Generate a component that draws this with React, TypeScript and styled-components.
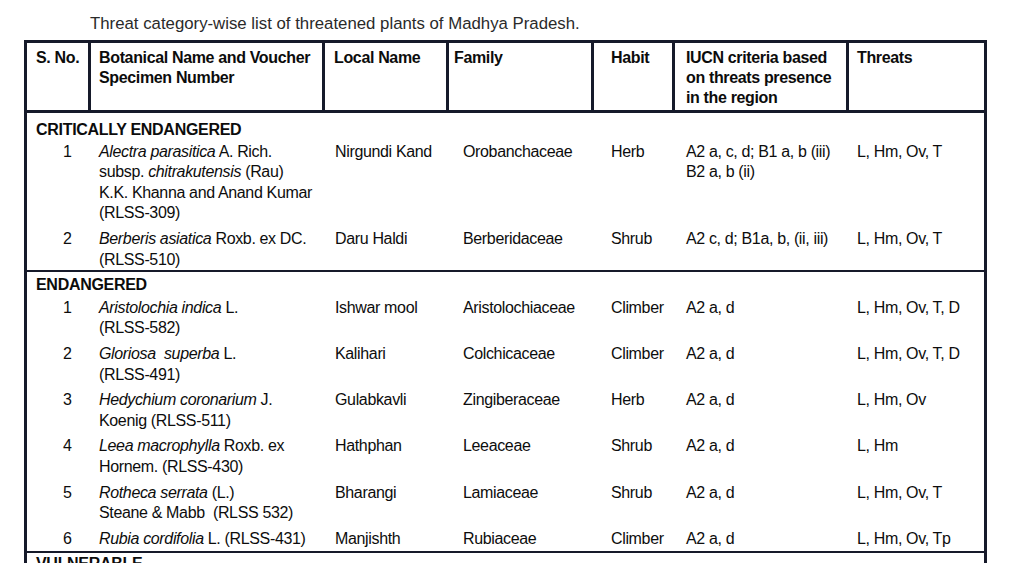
import React from "react";
import styled, { createGlobalStyle } from "styled-components";

const Global = createGlobalStyle`
  html, body { margin: 0; padding: 0; background: #fff; overflow: hidden; }
  body { font-family: "Liberation Sans", Arial, sans-serif; color: #111; }
`;

const COLS = "64px 234px 124px 145px 81px 174px 135px";
const BORDER = "#161a2a";

const Page = styled.div`
  width: 1024px;
  height: 563px;
  overflow: hidden;
  padding-top: 14px;
  box-sizing: border-box;
`;

const Title = styled.div`
  margin-left: 90px;
  font-size: 16.8px;
  line-height: 20px;
  color: #2a2a2a;
  height: 26px;
`;

const Table = styled.div`
  margin-left: 24px;
  width: 963px;
  border: 3px solid ${BORDER};
  border-bottom: none;
  box-sizing: border-box;
`;

const HeadRow = styled.div`
  display: grid;
  grid-template-columns: ${COLS};
  height: 70px;
  border-bottom: 3px solid ${BORDER};
  box-sizing: border-box;
`;

const HeadCell = styled.div<{ $pad: number; $last?: boolean }>`
  padding: 5px 0 0 ${(p) => p.$pad}px;
  border-right: ${(p) => (p.$last ? "none" : `3px solid ${BORDER}`)};
  font-weight: 700;
  font-size: 16px;
  line-height: 20px;
  letter-spacing: -0.35px;
  color: #0c0c0c;
`;

const Section = styled.div<{ $top: number; $bottom: number }>`
  padding: ${(p) => p.$top}px 0 ${(p) => p.$bottom}px 0;
  border-bottom: 2px solid ${BORDER};
`;

const SectionTitle = styled.div`
  padding-left: 9px;
  font-weight: 700;
  font-size: 16px;
  line-height: 20.6px;
  letter-spacing: -0.3px;
  color: #0c0c0c;
`;

const Row = styled.div<{ $gap: number }>`
  display: grid;
  grid-template-columns: ${COLS};
  margin-top: ${(p) => p.$gap}px;
  font-size: 16px;
  line-height: 20.6px;
  letter-spacing: -0.35px;
  color: #0d0d0d;
`;

const Cell = styled.div<{ $pad: number }>`
  padding-left: ${(p) => p.$pad}px;
  white-space: nowrap;
`;

const It = styled.i`
  font-style: italic;
`;

const HEAD_PADS = [9, 8, 9, 5, 17, 11, 8];
const BODY_PADS = [36, 8, 10, 14, 17, 11, 8];

type RowData = {
  n: string;
  name: React.ReactNode;
  local: string;
  family: string;
  habit: string;
  iucn: React.ReactNode;
  threats: string;
};

const critical: RowData[] = [
  {
    n: "1",
    name: (
      <>
        <It>Alectra parasitica</It> A. Rich.
        <br />
        subsp. <It>chitrakutensis</It> (Rau)
        <br />
        K.K. Khanna and Anand Kumar
        <br />
        (RLSS-309)
      </>
    ),
    local: "Nirgundi Kand",
    family: "Orobanchaceae",
    habit: "Herb",
    iucn: (
      <>
        A2 a, c, d; B1 a, b (iii)
        <br />
        B2 a, b (ii)
      </>
    ),
    threats: "L, Hm, Ov, T",
  },
  {
    n: "2",
    name: (
      <>
        <It>Berberis asiatica</It> Roxb. ex DC.
        <br />
        (RLSS-510)
      </>
    ),
    local: "Daru Haldi",
    family: "Berberidaceae",
    habit: "Shrub",
    iucn: "A2 c, d; B1a, b, (ii, iii)",
    threats: "L, Hm, Ov, T",
  },
];

const endangered: RowData[] = [
  {
    n: "1",
    name: (
      <>
        <It>Aristolochia indica</It> L.
        <br />
        (RLSS-582)
      </>
    ),
    local: "Ishwar mool",
    family: "Aristolochiaceae",
    habit: "Climber",
    iucn: "A2 a, d",
    threats: "L, Hm, Ov, T, D",
  },
  {
    n: "2",
    name: (
      <>
        <It>Gloriosa&nbsp; superba</It> L.
        <br />
        (RLSS-491)
      </>
    ),
    local: "Kalihari",
    family: "Colchicaceae",
    habit: "Climber",
    iucn: "A2 a, d",
    threats: "L, Hm, Ov, T, D",
  },
  {
    n: "3",
    name: (
      <>
        <It>Hedychium coronarium</It> J.
        <br />
        Koenig (RLSS-511)
      </>
    ),
    local: "Gulabkavli",
    family: "Zingiberaceae",
    habit: "Herb",
    iucn: "A2 a, d",
    threats: "L, Hm, Ov",
  },
  {
    n: "4",
    name: (
      <>
        <It>Leea macrophylla</It> Roxb. ex
        <br />
        Hornem. (RLSS-430)
      </>
    ),
    local: "Hathphan",
    family: "Leeaceae",
    habit: "Shrub",
    iucn: "A2 a, d",
    threats: "L, Hm",
  },
  {
    n: "5",
    name: (
      <>
        <It>Rotheca serrata</It> (L.)
        <br />
        Steane &amp; Mabb&nbsp; (RLSS 532)
      </>
    ),
    local: "Bharangi",
    family: "Lamiaceae",
    habit: "Shrub",
    iucn: "A2 a, d",
    threats: "L, Hm, Ov, T",
  },
  {
    n: "6",
    name: (
      <>
        <It>Rubia cordifolia</It> L. (RLSS-431)
      </>
    ),
    local: "Manjishth",
    family: "Rubiaceae",
    habit: "Climber",
    iucn: "A2 a, d",
    threats: "L, Hm, Ov, Tp",
  },
];

const headers: React.ReactNode[] = [
  "S. No.",
  <>
    Botanical Name and Voucher
    <br />
    Specimen Number
  </>,
  "Local Name",
  "Family",
  "Habit",
  <>
    IUCN criteria based
    <br />
    on threats presence
    <br />
    in the region
  </>,
  "Threats",
];

function DataRow({ r, gap }: { r: RowData; gap: number }) {
  const cells = [r.n, r.name, r.local, r.family, r.habit, r.iucn, r.threats];
  return (
    <Row $gap={gap}>
      {cells.map((c, i) => (
        <Cell key={i} $pad={BODY_PADS[i]}>
          {c}
        </Cell>
      ))}
    </Row>
  );
}

function Category({
  title,
  rows,
  top,
  bottom,
  firstGap,
  gap,
}: {
  title: string;
  rows: RowData[];
  top: number;
  bottom: number;
  firstGap: number;
  gap: number;
}) {
  return (
    <Section $top={top} $bottom={bottom}>
      <SectionTitle>{title}</SectionTitle>
      {rows.map((r, i) => (
        <DataRow key={i} r={r} gap={i === 0 ? firstGap : gap} />
      ))}
    </Section>
  );
}

export default function App() {
  return (
    <>
      <Global />
      <Page>
        <Title>Threat category-wise list of threatened plants of Madhya Pradesh.</Title>
        <Table>
          <HeadRow>
            {headers.map((h, i) => (
              <HeadCell key={i} $pad={HEAD_PADS[i]} $last={i === headers.length - 1}>
                {h}
              </HeadCell>
            ))}
          </HeadRow>
          <Category title="CRITICALLY ENDANGERED" rows={critical} top={7} bottom={0} firstGap={1} gap={5} />
          <Category title="ENDANGERED" rows={endangered} top={3} bottom={2} firstGap={2} gap={5} />
          <Category title="VULNERABLE" rows={[]} top={1} bottom={2} firstGap={1} gap={5} />
        </Table>
      </Page>
    </>
  );
}
